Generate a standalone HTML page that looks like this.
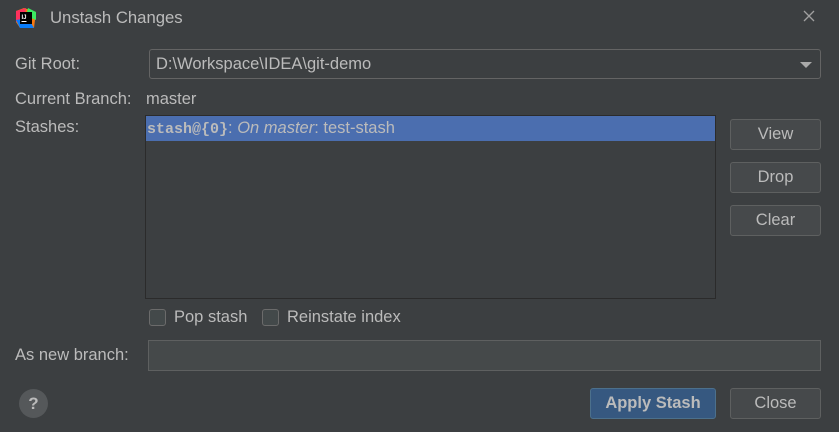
<!DOCTYPE html>
<html><head><style>
*{margin:0;padding:0;box-sizing:border-box}
body{width:839px;height:432px;background:#3c3f41;font-family:"Liberation Sans",sans-serif;color:#bbbbbb;font-size:16.5px;position:relative;overflow:hidden}
.a{position:absolute;white-space:nowrap}
.btn{position:absolute;border:1px solid #5e6060;background:#46494b;border-radius:3px;text-align:center;color:#bbbbbb;font-size:16.5px}
.cb{position:absolute;width:17px;height:17px;border:1px solid #6b6b6b;background:#43494a;border-radius:3px}
</style></head><body>
<div class="a" style="left:16px;top:8px;width:20px;height:20px">
<svg width="20" height="20"><polygon points="0,3 8,0 20,4 18,20 4,20 0,14" fill="#f97a12"/><polygon points="0,3 10,0 8,12 0,14" fill="#fe315d"/><polygon points="12,0 20,4 20,12 10,8" fill="#3bea62"/><polygon points="4,20 0,12 12,10 18,20" fill="#087cfa"/><rect x="4" y="4" width="12" height="12" fill="#000"/><text x="5.5" y="11" font-size="6" fill="#fff" font-family="Liberation Sans" font-weight="bold">IJ</text><rect x="5.5" y="13" width="5" height="1" fill="#fff"/></svg>
</div>
<div class="a" style="left:50px;top:8px;font-size:16.7px">Unstash Changes</div>
<svg class="a" style="left:803px;top:10px" width="12" height="12"><path d="M1 1L11 11M11 1L1 11" stroke="#a0a0a0" stroke-width="1.3"/></svg>

<div class="a" style="left:15px;top:55px">Git Root:</div>
<div class="a" style="left:149px;top:49px;width:672px;height:30px;border:1px solid #646464;border-radius:3px;background:#3c3f41"></div>
<div class="a" style="left:156px;top:55px">D:\Workspace\IDEA\git-demo</div>
<div class="a" style="left:800px;top:62px;width:0;height:0;border-left:6px solid transparent;border-right:6px solid transparent;border-top:6px solid #aaa"></div>

<div class="a" style="left:15px;top:90px">Current Branch:</div>
<div class="a" style="left:146px;top:90px">master</div>
<div class="a" style="left:15px;top:118px">Stashes:</div>
<div class="a" style="left:145px;top:115px;width:571px;height:184px;border:1px solid #2b2b2b;background:#3c3f41"></div>
<div class="a" style="left:146px;top:116px;width:569px;height:25px;background:#4b6eaf"></div>
<div class="a" style="left:147px;top:119px;color:#bbbbbb"><span style="font-family:'Liberation Mono',monospace;font-weight:bold;font-size:15px">stash@{0}</span>: <i>On master</i>: test-stash</div>

<div class="btn" style="left:730px;top:119px;width:91px;height:31px;line-height:29px">View</div>
<div class="btn" style="left:730px;top:162px;width:91px;height:31px;line-height:29px">Drop</div>
<div class="btn" style="left:730px;top:205px;width:91px;height:31px;line-height:29px">Clear</div>

<div class="cb" style="left:149px;top:309px"></div>
<div class="a" style="left:174px;top:308px">Pop stash</div>
<div class="cb" style="left:262px;top:309px"></div>
<div class="a" style="left:287px;top:308px">Reinstate index</div>

<div class="a" style="left:15px;top:346px">As new branch:</div>
<div class="a" style="left:148px;top:340px;width:673px;height:31px;border:1px solid #5e6060;background:#45494a"></div>

<div class="a" style="left:19px;top:389px;width:29px;height:29px;border-radius:50%;background:#55585a;color:#bbb;font-weight:bold;font-size:17px;text-align:center;line-height:29px">?</div>
<div class="btn" style="left:590px;top:388px;width:126px;height:31px;line-height:29px;background:#365880;border-color:#4c708c;font-weight:bold;color:#bbbbbb">Apply Stash</div>
<div class="btn" style="left:730px;top:388px;width:91px;height:31px;line-height:29px">Close</div>
</body></html>
